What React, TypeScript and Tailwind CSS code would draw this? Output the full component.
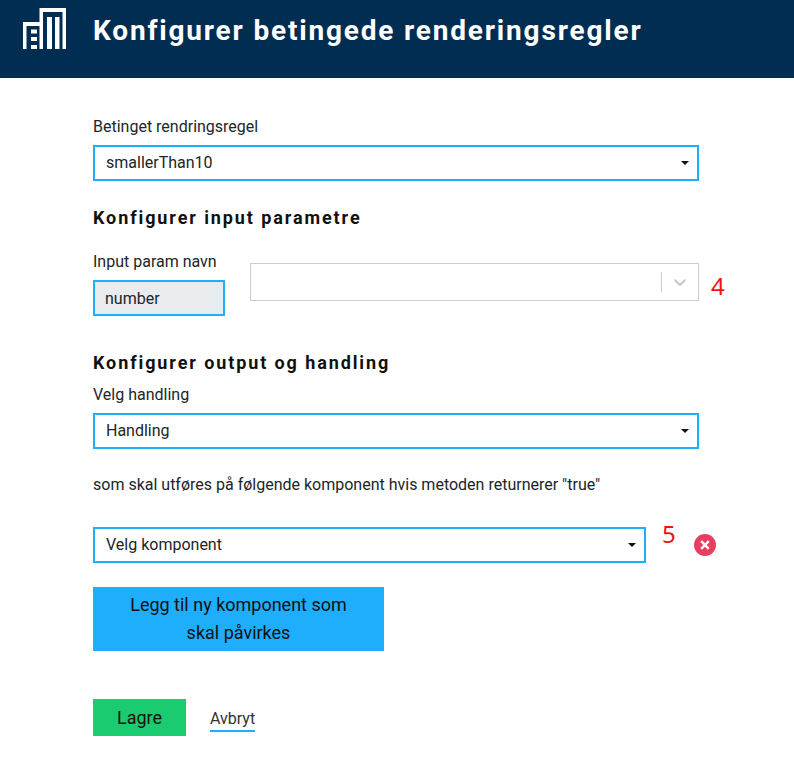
const roboto = "font-['Roboto',sans-serif]";

function Caret() {
  return (
    <svg width="8" height="4" viewBox="0 0 8 4" className="shrink-0">
      <path d="M0 0h8L4 4z" fill="#111" />
    </svg>
  );
}

function Select({ label, width }: { label: string; width: string }) {
  return (
    <div className={`flex h-9 items-center justify-between border-2 border-[#1eaefc] bg-white pl-[11px] pr-2 text-[16px] text-[#212529] ${width}`}>
      <span>{label}</span>
      <Caret />
    </div>
  );
}

export default function App() {
  return (
    <div className={`h-[783px] w-[794px] overflow-hidden bg-white ${roboto}`}>
      <header className="flex h-[78px] items-start bg-[#022d52] pl-[23px] pt-[8px]">
        <svg width="43" height="41" viewBox="0 0 43 41" fill="#fff" className="shrink-0">
          <path d="M16.5 41V0H43V41H39.5V4H20V41Z" />
          <path d="M0 41V14H17V18H3.5V41Z" />
          <path d="M24 9H29V41H24ZM32 9H36.5V41H32Z" />
          <path d="M8 21.5H14V25.5H8ZM8 29H14V33H8ZM8 37H14V41H8Z" />
        </svg>
        <h1 className="ml-[27px] mt-[4px] text-[28px] leading-[38px] font-bold tracking-[1.82px] text-white">
          Konfigurer betingede renderingsregler
        </h1>
      </header>

      <main className="pl-[93px]">
        <p className="mt-[39px] text-[16px] leading-[20px] text-[#212529]">Betinget rendringsregel</p>
        <div className="mt-[8px]">
          <Select label="smallerThan10" width="w-[606px]" />
        </div>

        <h2 className="mt-[26px] text-[18px] leading-[22px] font-bold tracking-[1.9px] text-[#111]">Konfigurer input parametre</h2>

        <div className="mt-[22px] flex items-start">
          <div>
            <p className="mt-px text-[16px] leading-[20px] text-[#212529]">Input param navn</p>
            <div className="mt-[8px] flex h-9 w-[132px] items-center border-2 border-[#1eaefc] bg-[#e9ecef] pl-[10px] pt-px text-[16px] text-[#212529]">number</div>
          </div>
          <div className="ml-[25px] mt-[12px] flex h-[38px] w-[449px] items-center justify-end border border-[#cccccc] bg-white">
            <span className="h-[20px] w-px bg-[#cccccc]" />
            <svg width="20" height="20" viewBox="0 0 20 20" className="mx-[8px]" fill="#cccccc">
              <path d="M4.516 7.548c.436-.446 1.043-.481 1.576 0L10 11.295l3.908-3.747c.533-.481 1.141-.446 1.574 0 .436.445.408 1.197 0 1.615-.406.418-4.695 4.502-4.695 4.502a1.095 1.095 0 0 1-1.576 0S4.924 9.581 4.516 9.163c-.409-.418-.436-1.17 0-1.615z" />
            </svg>
          </div>
          <span className="ml-[12px] mt-[20px] font-['Noto_Sans',sans-serif] text-[24px] leading-[30px] text-[#f01414]">4</span>
        </div>

        <h2 className="mt-[36px] text-[18px] leading-[22px] font-bold tracking-[1.9px] text-[#111]">Konfigurer output og handling</h2>
        <p className="mt-[11px] text-[16px] leading-[20px] text-[#212529]">Velg handling</p>
        <div className="mt-[8px]">
          <Select label="Handling" width="w-[606px]" />
        </div>

        <p className="mt-[26px] text-[16px] leading-[20px] text-[#212529]">som skal utføres på følgende komponent hvis metoden returnerer "true"</p>

        <div className="mt-[32px] flex items-start">
          <Select label="Velg komponent" width="w-[553px]" />
          <span className="ml-[16px] mt-[-9px] font-['Noto_Sans',sans-serif] text-[24px] leading-[32px] text-[#f01414]">5</span>
          <svg width="22" height="22" viewBox="0 0 22 22" className="ml-[18px] mt-[7px] shrink-0">
            <circle cx="11" cy="11" r="11" fill="#e83e5f" />
            <path d="M7.2 7.2l7.6 7.6M14.8 7.2l-7.6 7.6" stroke="#fff" strokeWidth="2.4" />
          </svg>
        </div>

        <button className="mt-[24px] block h-16 w-[291px] bg-[#1eaefc] px-8 text-[18px] leading-[28px] text-[#111]">
          Legg til ny komponent som skal påvirkes
        </button>

        <div className="mt-[48px] flex items-start">
          <button className="h-[37px] w-[93px] bg-[#1bcb6f] text-[18px] text-[#111]">Lagre</button>
          <span className="ml-[24px] mt-[9px] border-b-2 border-[#1eaefc] text-[16px] leading-[22px] text-[#333]">Avbryt</span>
        </div>
      </main>
    </div>
  );
}
